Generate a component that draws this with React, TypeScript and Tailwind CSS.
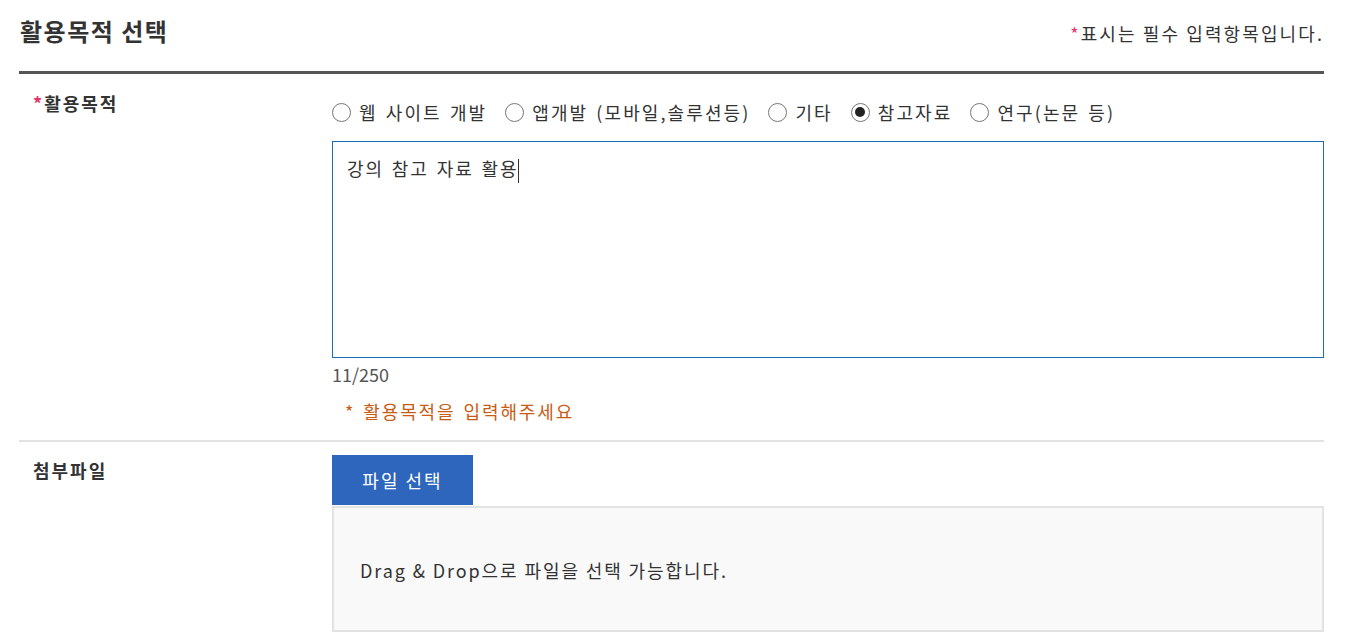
const purposes = [
  { label: "웹 사이트 개발", checked: false },
  { label: "앱개발 (모바일,솔루션등)", checked: false },
  { label: "기타", checked: false },
  { label: "참고자료", checked: true },
  { label: "연구(논문 등)", checked: false },
];

function Radio({ label, checked }: { label: string; checked: boolean }) {
  return (
    <label className="flex items-center gap-[8px]">
      <span className="flex h-[19px] w-[19px] items-center justify-center rounded-full border-[1.5px] border-[#767676] bg-white">
        {checked && <span className="h-[10px] w-[10px] rounded-full bg-[#222]" />}
      </span>
      <span className="text-[18px] leading-[28px] tracking-[2.1px] [word-spacing:2px] text-[#333]">
        {label}
      </span>
    </label>
  );
}

export default function App() {
  return (
    <div
      className="min-h-screen bg-white pl-[19px] pr-[41px] text-[#333]"
      style={{ fontFamily: '"Noto Sans CJK KR", "Noto Sans", sans-serif' }}
    >
      {/* Header */}
      <div className="flex h-[71px] items-center justify-between border-b-[3px] border-[#555] box-content">
        <h1 className="-mt-[9px] pl-[1px] text-[24px] font-bold leading-[34px] tracking-[1.5px] text-[#333]">
          활용목적 선택
        </h1>
        <p className="-mt-[5px] text-[18px] leading-[26px] tracking-[2.1px] text-[#333]">
          <span className="text-[#e0366f]">*</span>표시는 필수 입력항목입니다.
        </p>
      </div>

      {/* 활용목적 */}
      <div className="flex border-b-2 border-[#e2e2e2]">
        <div className="w-[313px] shrink-0 pl-[14px] pt-[16px]">
          <span className="text-[18px] font-bold leading-[26px] tracking-[2px]">
            <span className="text-[#e0366f]">*</span>활용목적
          </span>
        </div>
        <div className="flex-1 pb-[16px] pt-[24px]">
          <div className="flex items-center gap-[18px]">
            {purposes.map((p) => (
              <Radio key={p.label} label={p.label} checked={p.checked} />
            ))}
          </div>
          <div className="mt-[15px] h-[217px] border border-[#1b6bb3] px-[14px] py-[12px] text-[18px] leading-[28px] tracking-[1.9px] [word-spacing:2px] text-[#333]">
            강의 참고 자료 활용
            <span className="inline-block h-[24px] w-[1px] align-middle bg-[#333]" />
          </div>
          <p className="mt-[3px] text-[18px] leading-[26px] text-[#555]">11/250</p>
          <p className="ml-[13px] mt-[11px] text-[18px] leading-[26px] tracking-[1.9px] [word-spacing:2px] text-[#c95b12]">
            * 활용목적을 입력해주세요
          </p>
        </div>
      </div>

      {/* 첨부파일 */}
      <div className="flex">
        <div className="w-[313px] shrink-0 pl-[14px] pt-[15px]">
          <span className="text-[18px] font-bold leading-[26px] tracking-[2px]">첨부파일</span>
        </div>
        <div className="flex-1 pt-[13px]">
          <button className="flex h-[50px] w-[141px] items-center justify-center bg-[#2d66bc] text-[18px] tracking-[2px] text-white">
            파일 선택
          </button>
          <div className="mt-[1px] flex h-[126px] items-center border-2 border-[#e3e3e3] bg-[#f9f9f9] pl-[26px] pt-[1px]">
            <p className="text-[18px] leading-[26px] tracking-[1.9px] text-[#333]">
              Drag &amp; Drop으로 파일을 선택 가능합니다.
            </p>
          </div>
        </div>
      </div>
    </div>
  );
}
